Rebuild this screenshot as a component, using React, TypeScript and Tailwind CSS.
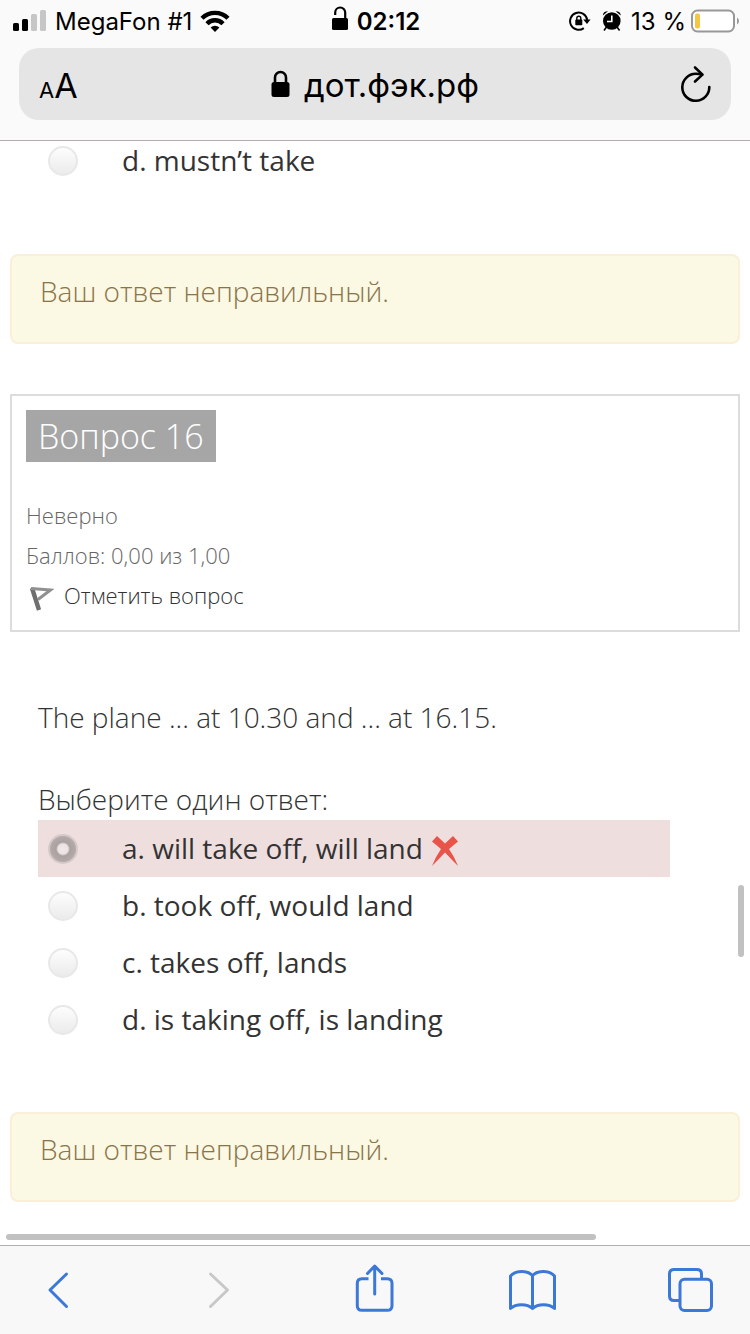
import {useState} from 'react'

const opciones = [
    {'id':'a', 'texto':'a. will take off, will land', 'error':true},
    {'id':'b', 'texto':'b. took off, would land', 'error':false},
    {'id':'c', 'texto':'c. takes off, lands', 'error':false},
    {'id':'d', 'texto':'d. is taking off, is landing', 'error':false},
]

const radioClass = "appearance-none shrink-0 w-[30px] h-[30px] ml-[10px] mr-11 rounded-full border-2 border-[#e8e8e8] bg-linear-to-b from-[#fdfdfd] to-[#ebebeb] checked:border-[#d5c9c9] checked:bg-[radial-gradient(circle,#f1e9e9_0,#ebe3e3_5px,#aaa0a0_7px,#b5abab_13px)]"

function StatusBar(){
    return (
        <div className="grid grid-cols-[1fr_auto_1fr] items-center h-10 pl-[13px] pr-[11px] text-[24px] leading-10">
            <div className="flex items-center">
                <svg width="33" height="22" viewBox="0 0 33 22" className="mr-[9px]">
                    <rect x="0" y="13" width="6" height="8" rx="1.5" fill="#000" />
                    <rect x="9" y="9" width="6" height="12" rx="1.5" fill="#000" />
                    <rect x="18" y="4" width="6" height="17" rx="1.5" fill="#c6c6c6" />
                    <rect x="27" y="0" width="6" height="21" rx="1.5" fill="#c6c6c6" />
                </svg>
                <span className="pt-0.5">MegaFon #1</span>
                <svg width="30" height="22" viewBox="0 0 30 22" className="ml-[8px]" fill="none" stroke="#000" strokeWidth="4.4">
                    <path d="M2 8.2 A18.5 18.5 0 0 1 28 8.2" />
                    <path d="M7 13.7 A11 11 0 0 1 23 13.7" />
                    <path d="M15 22 L10.6 17.6 A6.4 6.4 0 0 1 19.4 17.6 Z" fill="#000" stroke="none" />
                </svg>
            </div>
            <div className="flex items-center gap-2 font-semibold">
                <svg width="17" height="30" viewBox="0 0 17 30">
                    <path d="M3.2 9 V6.5 A5 5 0 0 1 13.2 6.5 V13" fill="none" stroke="#000" strokeWidth="2.2" />
                    <rect x="0" y="12" width="16" height="12" rx="1.5" />
                </svg>
                <span className="pt-0.5">02:12</span>
            </div>
            <div className="flex items-center justify-end">
                <svg width="22" height="22" viewBox="0 0 22 22" className="mr-[11px]">
                    <path d="M14.8 18.1 A8.6 8.6 0 1 1 18.2 10" fill="none" stroke="#000" strokeWidth="2" />
                    <path d="M14.2 9.5 H21.6 L18 14 Z" />
                    <rect x="6.3" y="9.6" width="7" height="5.6" rx="0.8" />
                    <path d="M7.8 10 V8.3 A2 2 0 0 1 11.8 8.3 V10" fill="none" stroke="#000" strokeWidth="1.4" />
                </svg>
                <svg width="20" height="22" viewBox="0 0 20 22" className="mr-[9px]">
                    <circle cx="9.8" cy="11" r="8.8" />
                    <path d="M0.8 5.5 Q1 1.2 6 1.2 Z M13.600 1.200 Q18.600 1.200 18.800 5.500 Z" />
                    <path d="M4.5 17 L2 20.5 M15 17 L17.6 20.5" stroke="#000" strokeWidth="1.6" />
                    <path d="M9.8 5.5 V11.5 H5" fill="none" stroke="#fff" strokeWidth="1.6" />
                </svg>
                <span className="pt-0.5 mr-[5px]">13 %</span>
                <svg width="48" height="24" viewBox="0 0 48 24">
                    <rect x="1" y="1.5" width="42" height="21" rx="5.5" fill="#fff" stroke="#989898" strokeWidth="2" />
                    <rect x="4" y="4.5" width="5" height="15" rx="2" fill="#f5c644" />
                    <path d="M46 8.5 Q48 9.5 48 12 Q48 14.5 46 15.5 Z" fill="#989898" />
                </svg>
            </div>
        </div>
    )
}

function AddressBar(){
    return (
        <div className="grid grid-cols-[1fr_auto_1fr] items-center mx-[19px] mt-2 mb-5 h-[72px] px-5 rounded-[20px] bg-[#e6e5e5]">
            <button type="button" aria-label="Размер текста" className="justify-self-start flex items-baseline pt-0.5">
                <span className="text-[22px]">A</span>
                <span className="text-[34px]">A</span>
            </button>
            <div className="flex items-center gap-[14px]">
                <svg width="19" height="28" viewBox="0 0 19 28">
                    <path d="M4 12 V7.5 A5.5 5.5 0 0 1 15 7.5 V12" fill="none" stroke="#000" strokeWidth="2.6" />
                    <rect x="0.5" y="12" width="18" height="15" rx="2.5" />
                </svg>
                <span className="pt-0.5 text-[33px] leading-10">дот.фэк.рф</span>
            </div>
            <button type="button" aria-label="Обновить" className="justify-self-end">
                <svg width="30" height="38" viewBox="0 0 30 38" fill="none" stroke="#000" strokeWidth="2.6" strokeLinecap="round" strokeLinejoin="round">
                    <path d="M28.3 22 A13.5 13.5 0 1 1 14.8 8.8 Q18.5 8.8 21 9.6" />
                    <path d="M14 2.500 L21.500 9.600 L14 16.500" />
                </svg>
            </button>
        </div>
    )
}

function Aviso(){
    return (
        <div className="mx-[10px] h-[90px] pt-[15px] px-7 rounded-lg border-2 border-[#faefd9] bg-[#fbf8e4] text-[#8a7448] font-light leading-10">
            Ваш ответ неправильный.
        </div>
    )
}

function Toolbar(){
    return (
        <nav className="flex items-center justify-between h-[89px] pl-[34px] pr-9 border-t border-[#b0b0b0] bg-[#f8f8f8] text-[#3b78d8]">
            <button type="button" aria-label="Назад">
                <svg width="48" height="48" viewBox="0 0 48 48" fill="none" stroke="currentColor" strokeWidth="3" strokeLinecap="round" strokeLinejoin="round">
                    <path d="M32.5 8 L16 24 L32.5 40.5" />
                </svg>
            </button>
            <button type="button" aria-label="Вперёд" disabled className="text-[#c8c8c8]">
                <svg width="48" height="48" viewBox="0 0 48 48" fill="none" stroke="currentColor" strokeWidth="3" strokeLinecap="round" strokeLinejoin="round">
                    <path d="M18.5 8 L35.5 24 L18.5 40.5" />
                </svg>
            </button>
            <button type="button" aria-label="Поделиться">
                <svg width="48" height="48" viewBox="0 0 48 48" fill="none" stroke="currentColor" strokeWidth="3" strokeLinejoin="round" className="overflow-visible">
                    <path d="M18.5 12.7 H12 Q7.3 12.7 7.3 17.3 V39.7 Q7.3 44.3 12 44.3 H37.3 Q42 44.3 42 39.7 V17.3 Q42 12.7 37.3 12.7 H31" />
                    <path d="M24.7 28 V0.5 M17.5 7.5 L24.7 0 L32 7.5" strokeLinecap="round" />
                </svg>
            </button>
            <button type="button" aria-label="Закладки">
                <svg width="48" height="48" viewBox="0 0 48 48" fill="none" stroke="currentColor" strokeWidth="3" strokeLinecap="round" strokeLinejoin="round">
                    <path d="M2.5 42.5 V10 C8 4 19 4 24.5 9.5 C30 4 41 4 46.5 10 V42.5 C41 37.5 30 37.5 24.5 42.5 C19 37.5 8 37.5 2.5 42.5 Z M24.5 9.5 V42.5" />
                </svg>
            </button>
            <button type="button" aria-label="Вкладки">
                <svg width="48" height="48" viewBox="0 0 48 48" fill="none" stroke="currentColor" strokeWidth="3">
                    <rect x="14" y="13.3" width="31.5" height="31.2" rx="4.5" />
                    <path d="M35.5 13 V8 Q35.5 3.5 31 3.5 H8 Q3.5 3.5 3.5 8 V30 Q3.5 34.5 8 34.5 H14" />
                </svg>
            </button>
        </nav>
    )
}

export default function App(){
    const [respuesta, setRespuesta] = useState('a')

    return (
        <div className="relative flex flex-col min-h-screen bg-white text-[28px] text-[#333] font-['Open_Sans','Noto_Sans',sans-serif]">
            <header className="border-b border-[#b2aeae] bg-[#fafafa] text-black font-['Inter','Liberation_Sans',sans-serif]">
                <StatusBar />
                <AddressBar />
            </header>

            <main className="relative flex-1">
                {/* Pregunta anterior */}
                <label className="flex items-center h-10 ml-[38px]">
                    <input type="radio" name="q15" className={radioClass} />
                    <span className="pb-0.5">d. mustn’t take</span>
                </label>
                <div className="mt-[73px]">
                    <Aviso />
                </div>

                {/* Info de la pregunta */}
                <section className="mx-[10px] mt-[50px] h-[238px] p-[14px] border-2 border-[#dcdcdc] text-[22px] leading-10 font-light text-[#666]">
                    <h3 className="w-fit h-[52px] px-3 bg-[#a6a6a6] text-white text-[34px] leading-[52px]">Вопрос 16</h3>
                    <p className="mt-[33px]">Неверно</p>
                    <p>Баллов: 0,00 из 1,00</p>
                    <a href="#flag" className="flex items-center text-[#333]">
                        <svg width="26" height="28" viewBox="0 0 26 28" className="ml-[2px] mr-[10px] mt-2" fill="none" stroke="#6f6f6f">
                            <path d="M4 3 L11 25" strokeWidth="4.4" />
                            <path d="M3 3.5 L22.5 5 L10 14.5" strokeWidth="3" stroke="#909090" />
                        </svg>
                        Отметить вопрос
                    </a>
                </section>

                {/* Pregunta 16 */}
                <section className="mt-[65px] ml-[38px] mr-20">
                    <p className="font-light leading-10">The plane ... at 10.30 and ... at 16.15.</p>
                    <fieldset className="mt-[42px]">
                        <legend className="mb-px font-light leading-10">Выберите один ответ:</legend>
                        {opciones.map((op) => (
                            <label key={op.id} className={`flex items-center h-[57px] ${op.error ? 'bg-[#eedede]' : ''}`}>
                                <input
                                    type="radio"
                                    name="q16"
                                    className={radioClass}
                                    checked={respuesta === op.id}
                                    onChange={() => setRespuesta(op.id)}
                                />
                                <span className="pb-0.5">{op.texto}</span>
                                {op.error && (
                                    <svg width="26" height="30" viewBox="0 0 26 30" className="ml-[9px] mt-1" fill="#e9544a">
                                        <path d="M0 5.5 L5 0 L13 7.5 L21 0 L26 5.5 L17 13 Q22 20 26 30 Q19 23 13 16.5 Q7 23 0 30 Q4 20 9 13 Z" />
                                    </svg>
                                )}
                            </label>
                        ))}
                    </fieldset>
                </section>
                <div className="mt-16 mb-[43px]">
                    <Aviso />
                </div>

                {/* Indicadores de scroll */}
                <div className="absolute right-[6px] top-[744px] w-[6px] h-[72px] rounded-full bg-[#c1c1c1]" />
                <div className="absolute left-[6px] right-[154px] bottom-[5px] h-[6px] rounded-full bg-[#c1c1c1]" />
            </main>

            <Toolbar />
        </div>
    )
}
